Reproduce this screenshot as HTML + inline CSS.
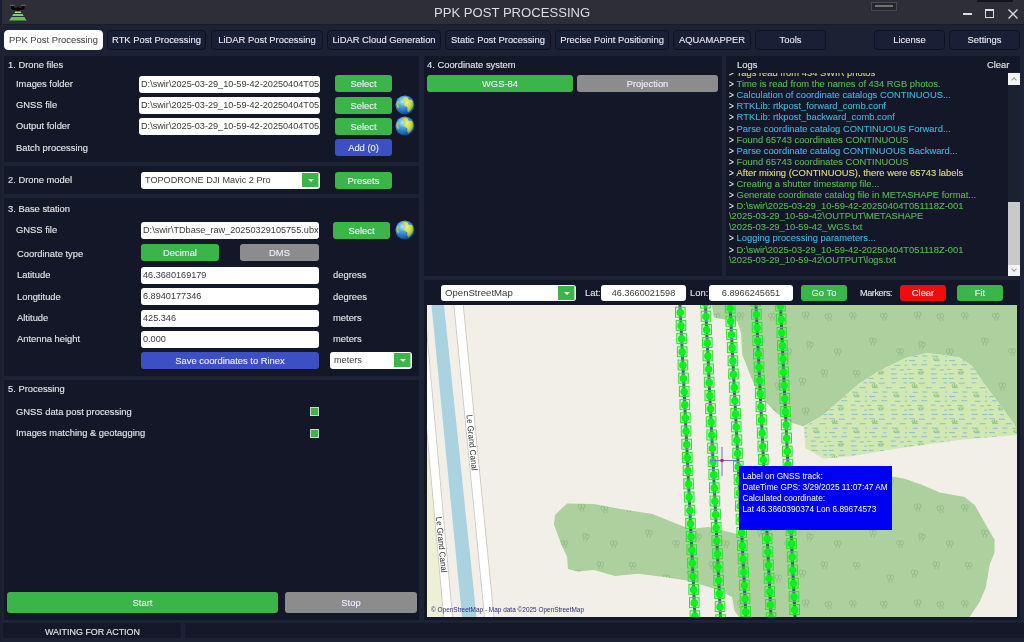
<!DOCTYPE html>
<html><head><meta charset="utf-8">
<style>
*{margin:0;padding:0;box-sizing:border-box}
html,body{width:1024px;height:642px;overflow:hidden;-webkit-font-smoothing:antialiased;background:#131727;font-family:"Liberation Sans",sans-serif;font-size:9.4px;color:#e4e6ea}
.a{position:absolute}
.t{position:absolute;white-space:nowrap;line-height:1}
#title{left:0;top:0;width:1024px;height:23.6px;background:#2d2e38}
#tabbar{left:0;top:23.6px;width:1024px;height:32.4px;background:#1d2134;border-top:1.4px solid #1b1c26}
.tab{position:absolute;top:29.5px;height:20.9px;background:#192036;border:1px solid #0e1220;border-radius:4px;color:#e6e8ee;text-align:center;line-height:18.9px;font-size:9.4px}
.tab.on{background:#fdfdfd;color:#4a4a4a;border-color:#fdfdfd}
.panel{position:absolute;background:#141728}
.div{position:absolute;background:#1d2235}
.inp{position:absolute;background:#fff;border-radius:3px;color:#3a3a3a;font-size:9.15px;line-height:17px;padding-left:2px;white-space:nowrap;overflow:hidden}
.btn{position:absolute;border-radius:3px;color:#eef;text-align:center;font-size:9.4px;white-space:nowrap}
.g{background:#3bb54a}
.b{background:#3d4fc4}
.gr{background:#8c8c8c}
.r{background:#f00c0c}
.lbl{position:absolute;white-space:nowrap;line-height:1;color:#e4e6ea;margin-top:-1px}
.lbl,.tab,.btn,#log,.t{-webkit-text-stroke-width:0.12px}
.tab.on{-webkit-text-stroke-width:0.05px}
.gt{color:#e8e8ee;display:inline-block;width:7.6px;font-size:8.4px;line-height:0}
#log>div{height:11.12px}
#log>div.lg{height:10.5px}
.lg{color:#56b656}
.lc{color:#3cb4dc}
.ly{color:#dede8a}
</style></head><body><div id="root" style="position:absolute;left:0;top:0;width:1024px;height:642px;will-change:transform">
<!-- title bar -->
<div class="a" id="title"></div>
<div class="a" style="left:0;top:0;width:1.5px;height:642px;background:#1b1f2e"></div>
<div class="t" style="left:434px;top:6px;font-size:13.1px;color:#dcdde2;-webkit-text-stroke-width:0">PPK POST PROCESSING</div>


<!-- logo -->
<svg class="a" style="left:0;top:0" width="32" height="23" viewBox="0 0 32 23">
<path d="M10 5.3h4.5M21 5.3h4.5" stroke="#6a6a70" stroke-width="1.1"/>
<path d="M11 6.2h3v1.6h2.6l1.2-1.4 1.2 1.4h2.6V6.2h3v2.4l-2.6 1.4h-2.4l-1.8 1.2-1.8-1.2h-2.4L11 8.6z" fill="#060606"/>
<polygon points="15.2,11.6 20.6,11.6 21.4,13.1 14.4,13.1" fill="#b2dca0"/>
<polygon points="13.2,14 22.6,14 23.6,16.1 12.2,16.1" fill="#86cb70"/>
<polygon points="11.4,17 24.4,17 26.6,20.4 9,20.4" fill="#6cbd58"/>
</svg>
<!-- window controls -->
<div class="a" style="left:963px;top:13px;width:9px;height:2px;background:#dcdcdc"></div>
<div class="a" style="left:985px;top:9px;width:9px;height:9px;border:1.3px solid #dcdcdc;border-top-width:2px"></div>
<svg class="a" style="left:1007px;top:8px" width="12" height="12" viewBox="0 0 12 12"><path d="M1.5 1.5l9 9M10.5 1.5l-9 9" stroke="#dcdcdc" stroke-width="1.4"/></svg>
<div class="a" style="left:871px;top:2px;width:26px;height:9px;border:1px solid #4a4a52;background:#26262e"></div>
<div class="a" style="left:875px;top:5px;width:18px;height:2px;background:#74746a"></div>
<div class="a" style="left:977px;top:0;width:36px;height:2px;background:#141418"></div>

<!-- tab bar -->
<div class="a" id="tabbar"></div>
<div class="tab on" style="left:4px;width:99px">PPK Post Processing</div>
<div class="tab" style="left:107px;width:99px">RTK Post Processing</div>
<div class="tab" style="left:211px;width:112px">LiDAR Post Processing</div>
<div class="tab" style="left:327px;width:114px">LiDAR Cloud Generation</div>
<div class="tab" style="left:445px;width:106px">Static Post Processing</div>
<div class="tab" style="left:555px;width:114px">Precise Point Positioning</div>
<div class="tab" style="left:673px;width:78px">AQUAMAPPER</div>
<div class="tab" style="left:755px;width:71px">Tools</div>
<div class="tab" style="left:874px;width:71px">License</div>
<div class="tab" style="left:949px;width:71px">Settings</div>

<!-- panel frame -->
<div class="div" style="left:2px;top:56px;width:1022px;height:566px"></div>
<div class="panel" style="left:4px;top:56px;width:415px;height:106px"></div>
<div class="panel" style="left:4px;top:166px;width:415px;height:28px"></div>
<div class="panel" style="left:4px;top:198px;width:415px;height:178px"></div>
<div class="panel" style="left:4px;top:380px;width:415px;height:240px"></div>
<div class="panel" style="left:424px;top:56px;width:298px;height:220px"></div>
<div class="panel" style="left:726px;top:56px;width:294px;height:220px"></div>
<div class="panel" style="left:424px;top:280px;width:596px;height:340px"></div>


<!-- ===== left panel ===== -->
<div class="lbl" style="left:8px;top:61px">1. Drone files</div>
<div class="lbl" style="left:16px;top:80px">Images folder</div>
<div class="lbl" style="left:16px;top:101px">GNSS file</div>
<div class="lbl" style="left:16px;top:122px">Output folder</div>
<div class="lbl" style="left:16px;top:144px">Batch processing</div>
<div class="inp" style="left:139px;top:76px;width:181px;height:17px">D:\swir\2025-03-29_10-59-42-20250404T051118Z-001</div>
<div class="inp" style="left:139px;top:97px;width:181px;height:17px">D:\swir\2025-03-29_10-59-42-20250404T051118Z-001</div>
<div class="inp" style="left:139px;top:118px;width:181px;height:17px">D:\swir\2025-03-29_10-59-42-20250404T051118Z-001</div>
<div class="btn g" style="left:335px;top:75px;width:57px;height:17px;line-height:17px">Select</div>
<div class="btn g" style="left:335px;top:97px;width:57px;height:17px;line-height:17px">Select</div>
<div class="btn g" style="left:335px;top:118px;width:57px;height:17px;line-height:17px">Select</div>
<div class="btn b" style="left:335px;top:139px;width:57px;height:17px;line-height:17px">Add (0)</div>
<svg class="a" style="left:394.5px;top:95px" width="20" height="20" viewBox="0 0 20 20"><defs><radialGradient id="gl" cx="38%" cy="32%" r="72%"><stop offset="0" stop-color="#b8ecff"/><stop offset=".35" stop-color="#4aa6e8"/><stop offset=".8" stop-color="#1a5fb0"/><stop offset="1" stop-color="#0c3a78"/></radialGradient><radialGradient id="gll" cx="40%" cy="35%" r="70%"><stop offset="0" stop-color="#eef27a"/><stop offset=".6" stop-color="#c2d640"/><stop offset="1" stop-color="#6a9a30"/></radialGradient></defs><circle cx="10" cy="10" r="9.6" fill="url(#gl)"/><path d="M7.5 2.2c1.5-.6 3.5-.8 5 .2 1 .6.2 1.6 1.2 2 1.2.4 2.6-.3 3.6 1 .8 1.2 1.2 3 1.1 4.6-.2 1.8-1 3.4-2.2 4.7-.8.8-1.6 2-2.6 2.5-.8.4-1-.8-1.2-1.6-.3-1.2.4-2.4-.2-3.4-.6-1-2.2-.8-3-1.8-.8-1-.2-2.4.6-3.2.6-.6-.2-1.4-1-1.6-.8-.2-1.4-.8-1.3-1.6z" fill="url(#gll)"/><path d="M2.4 6.5c.8-.4 1.6.2 1.6 1s-.8 1.6-.6 2.4c.2.9 1 1.6.7 2.4-.3.8-1.3.6-1.8 0-.7-1-.9-2.4-.8-3.7z" fill="#b8d040" opacity=".9"/></svg>
<svg class="a" style="left:394.5px;top:116px" width="20" height="20" viewBox="0 0 20 20"><defs><radialGradient id="gl2" cx="38%" cy="32%" r="72%"><stop offset="0" stop-color="#b8ecff"/><stop offset=".35" stop-color="#4aa6e8"/><stop offset=".8" stop-color="#1a5fb0"/><stop offset="1" stop-color="#0c3a78"/></radialGradient><radialGradient id="gl2l" cx="40%" cy="35%" r="70%"><stop offset="0" stop-color="#eef27a"/><stop offset=".6" stop-color="#c2d640"/><stop offset="1" stop-color="#6a9a30"/></radialGradient></defs><circle cx="10" cy="10" r="9.6" fill="url(#gl2)"/><path d="M7.5 2.2c1.5-.6 3.5-.8 5 .2 1 .6.2 1.6 1.2 2 1.2.4 2.6-.3 3.6 1 .8 1.2 1.2 3 1.1 4.6-.2 1.8-1 3.4-2.2 4.7-.8.8-1.6 2-2.6 2.5-.8.4-1-.8-1.2-1.6-.3-1.2.4-2.4-.2-3.4-.6-1-2.2-.8-3-1.8-.8-1-.2-2.4.6-3.2.6-.6-.2-1.4-1-1.6-.8-.2-1.4-.8-1.3-1.6z" fill="url(#gl2l)"/><path d="M2.4 6.5c.8-.4 1.6.2 1.6 1s-.8 1.6-.6 2.4c.2.9 1 1.6.7 2.4-.3.8-1.3.6-1.8 0-.7-1-.9-2.4-.8-3.7z" fill="#b8d040" opacity=".9"/></svg>
<svg class="a" style="left:394.5px;top:220px" width="20" height="20" viewBox="0 0 20 20"><defs><radialGradient id="gl3" cx="38%" cy="32%" r="72%"><stop offset="0" stop-color="#b8ecff"/><stop offset=".35" stop-color="#4aa6e8"/><stop offset=".8" stop-color="#1a5fb0"/><stop offset="1" stop-color="#0c3a78"/></radialGradient><radialGradient id="gl3l" cx="40%" cy="35%" r="70%"><stop offset="0" stop-color="#eef27a"/><stop offset=".6" stop-color="#c2d640"/><stop offset="1" stop-color="#6a9a30"/></radialGradient></defs><circle cx="10" cy="10" r="9.6" fill="url(#gl3)"/><path d="M7.5 2.2c1.5-.6 3.5-.8 5 .2 1 .6.2 1.6 1.2 2 1.2.4 2.6-.3 3.6 1 .8 1.2 1.2 3 1.1 4.6-.2 1.8-1 3.4-2.2 4.7-.8.8-1.6 2-2.6 2.5-.8.4-1-.8-1.2-1.6-.3-1.2.4-2.4-.2-3.4-.6-1-2.2-.8-3-1.8-.8-1-.2-2.4.6-3.2.6-.6-.2-1.4-1-1.6-.8-.2-1.4-.8-1.3-1.6z" fill="url(#gl3l)"/><path d="M2.4 6.5c.8-.4 1.6.2 1.6 1s-.8 1.6-.6 2.4c.2.9 1 1.6.7 2.4-.3.8-1.3.6-1.8 0-.7-1-.9-2.4-.8-3.7z" fill="#b8d040" opacity=".9"/></svg>
<div class="lbl" style="left:8px;top:176px">2. Drone model</div>
<div class="inp" style="left:141px;top:172px;width:179px;height:17px;padding-left:4px">TOPODRONE DJI Mavic 2 Pro</div>
<div class="a g" style="left:302px;top:173px;width:16.7px;height:14px;border-right:1px solid #a8dca8"></div>
<div class="a" style="left:307.6px;top:178.6px;width:0;height:0;border-left:3px solid transparent;border-right:3px solid transparent;border-top:3.3px solid #f4fff4"></div>
<div class="btn g" style="left:335px;top:172px;width:57px;height:17px;line-height:17px">Presets</div>

<div class="lbl" style="left:8px;top:205px">3. Base station</div>
<div class="lbl" style="left:16px;top:226px">GNSS file</div>
<div class="inp" style="left:141px;top:222px;width:178px;height:17px">D:\swir\TDbase_raw_20250329105755.ubx</div>
<div class="btn g" style="left:333px;top:222px;width:57px;height:17px;line-height:17px">Select</div>
<div class="lbl" style="left:17px;top:250px">Coordinate type</div>
<div class="btn g" style="left:141px;top:244px;width:78px;height:17px;line-height:17px">Decimal</div>
<div class="btn gr" style="left:240px;top:244px;width:79px;height:17px;line-height:17px">DMS</div>
<div class="lbl" style="left:17px;top:271px">Latitude</div>
<div class="lbl" style="left:17px;top:293px">Longtitude</div>
<div class="lbl" style="left:17px;top:314px">Altitude</div>
<div class="lbl" style="left:17px;top:335px">Antenna height</div>
<div class="inp" style="left:141px;top:267px;width:178px;height:17px">46.3680169179</div>
<div class="inp" style="left:141px;top:288px;width:178px;height:17px">6.8940177346</div>
<div class="inp" style="left:141px;top:310px;width:178px;height:17px">425.346</div>
<div class="inp" style="left:141px;top:331px;width:178px;height:17px">0.000</div>
<div class="lbl" style="left:333px;top:271px">degress</div>
<div class="lbl" style="left:333px;top:293px">degrees</div>
<div class="lbl" style="left:333px;top:314px">meters</div>
<div class="lbl" style="left:333px;top:335px">meters</div>
<div class="btn b" style="left:141px;top:352px;width:178px;height:17px;line-height:17px">Save coordinates to Rinex</div>
<div class="inp" style="left:330px;top:352px;width:82px;height:17px;padding-left:4px">meters</div>
<div class="a g" style="left:394px;top:353px;width:16.7px;height:14px;border-right:1px solid #a8dca8"></div>
<div class="a" style="left:399.6px;top:358.6px;width:0;height:0;border-left:3px solid transparent;border-right:3px solid transparent;border-top:3.3px solid #f4fff4"></div>

<div class="lbl" style="left:8px;top:385px">5. Processing</div>
<div class="lbl" style="left:16px;top:408px">GNSS data post processing</div>
<div class="lbl" style="left:16px;top:429px">Images matching &amp; geotagging</div>
<div class="a" style="left:310px;top:407px;width:9px;height:9px;background:#3bb54a;border:1px solid #cfd6cf"></div>
<div class="a" style="left:310px;top:429px;width:9px;height:9px;background:#3bb54a;border:1px solid #cfd6cf"></div>
<div class="btn g" style="left:7px;top:592px;width:271px;height:21px;line-height:21px">Start</div>
<div class="btn gr" style="left:285px;top:592px;width:132px;height:21px;line-height:21px">Stop</div>


<!-- ===== coordinate system ===== -->
<div class="lbl" style="left:427px;top:61px">4. Coordinate system</div>
<div class="btn g" style="left:427px;top:75px;width:146px;height:17px;line-height:17px">WGS-84</div>
<div class="btn gr" style="left:577px;top:75px;width:141px;height:17px;line-height:17px">Projection</div>

<!-- ===== logs ===== -->
<div class="lbl" style="left:737px;top:61px">Logs</div>
<div class="lbl" style="left:987px;top:61px">Clear</div>
<div class="a" style="left:729px;top:72.5px;width:279px;height:203.5px;overflow:hidden">
<div class="a" style="left:0;top:-5.5px;width:290px;font-size:9.4px;line-height:11px" id="log">
<div><span class="gt">&gt;</span><span style="color:#d4d46a">Tags read from 434 SWIR photos</span></div>
<div><span class="gt">&gt;</span><span class="lg">Time is read from the names of 434 RGB photos.</span></div>
<div><span class="gt">&gt;</span><span class="lc">Calculation of coordinate catalogs CONTINUOUS...</span></div>
<div><span class="gt">&gt;</span><span class="lc">RTKLib: rtkpost_forward_comb.conf</span></div>
<div><span class="gt">&gt;</span><span class="lc">RTKLib: rtkpost_backward_comb.conf</span></div>
<div><span class="gt">&gt;</span><span class="lc">Parse coordinate catalog CONTINUOUS Forward...</span></div>
<div><span class="gt">&gt;</span><span class="lg">Found 65743 coordinates CONTINUOUS</span></div>
<div><span class="gt">&gt;</span><span class="lc">Parse coordinate catalog CONTINUOUS Backward...</span></div>
<div><span class="gt">&gt;</span><span class="lg">Found 65743 coordinates CONTINUOUS</span></div>
<div><span class="gt">&gt;</span><span class="ly">After mixing (CONTINUOUS), there were 65743 labels</span></div>
<div><span class="gt">&gt;</span><span class="lg">Creating a shutter timestamp file...</span></div>
<div><span class="gt">&gt;</span><span class="lg">Generate coordinate catalog file in METASHAPE format...</span></div>
<div><span class="gt">&gt;</span><span class="lg">D:\swir\2025-03-29_10-59-42-20250404T051118Z-001</span></div>
<div class="lg" style="line-height:10.5px">\2025-03-29_10-59-42\OUTPUT\METASHAPE</div>
<div class="lg" style="line-height:10.5px">\2025-03-29_10-59-42_WGS.txt</div>
<div><span class="gt">&gt;</span><span class="lc">Logging processing parameters...</span></div>
<div><span class="gt">&gt;</span><span class="lg">D:\swir\2025-03-29_10-59-42-20250404T051118Z-001</span></div>
<div class="lg" style="line-height:10.5px">\2025-03-29_10-59-42\OUTPUT\logs.txt</div>
</div></div>
<!-- scrollbar -->
<div class="a" style="left:1008px;top:72px;width:12px;height:204px;background:#1c2131"></div>
<div class="a" style="left:1008.3px;top:73px;width:12px;height:12px;background:#f4f4f4"></div>
<div class="a" style="left:1012.4px;top:78.4px;width:4px;height:4px;border-left:1.1px solid #9a9a9a;border-top:1.1px solid #9a9a9a;transform:rotate(45deg)"></div>
<div class="a" style="left:1008.3px;top:202px;width:12px;height:63px;background:#c9c9c9"></div>
<div class="a" style="left:1008.3px;top:265px;width:12px;height:11px;background:#f4f4f4"></div>
<div class="a" style="left:1012.4px;top:267px;width:4px;height:4px;border-right:1.1px solid #9a9a9a;border-bottom:1.1px solid #9a9a9a;transform:rotate(45deg)"></div>

<!-- ===== map toolbar ===== -->
<div class="inp" style="left:441px;top:285px;width:135px;height:16px;line-height:16px;padding-left:4px;font-size:9.6px">OpenStreetMap</div>
<div class="a g" style="left:558px;top:286px;width:16.7px;height:14px;border-right:1px solid #a8dca8"></div>
<div class="a" style="left:563.6px;top:291.5px;width:0;height:0;border-left:3px solid transparent;border-right:3px solid transparent;border-top:3.3px solid #f4fff4"></div>
<div class="lbl" style="left:585px;top:289px">Lat:</div>
<div class="inp" style="left:601px;top:285px;width:85px;height:16px;line-height:16px;text-align:center;padding:0">46.3660021598</div>
<div class="lbl" style="left:690px;top:289px">Lon:</div>
<div class="inp" style="left:709px;top:285px;width:84px;height:16px;line-height:16px;text-align:center;padding:0">6.8966245651</div>
<div class="btn g" style="left:801px;top:285px;width:46px;height:16px;line-height:16px">Go To</div>
<div class="lbl" style="left:860px;top:290px;letter-spacing:-0.35px;font-size:9px">Markers:</div>
<div class="btn r" style="left:900px;top:285px;width:46px;height:16px;line-height:16px">Clear</div>
<div class="btn g" style="left:957px;top:285px;width:46px;height:16px;line-height:16px">Fit</div>

<!-- MAP START -->
<svg class="a" style="left:427px;top:305px" width="590" height="312" viewBox="0 0 590 312">
<defs>
<pattern id="trees" patternUnits="userSpaceOnUse" width="112" height="96"><g fill="none" stroke="#8db57f" stroke-width="0.75"><g transform="translate(5.4,7.8) rotate(-9 3.5 4)"><ellipse cx="2" cy="2.6" rx="1.7" ry="2.3"/><ellipse cx="5.2" cy="2.9" rx="1.7" ry="2.3"/><path d="M2.2 5v3M5.2 5.2v2.8"/></g><g transform="translate(39.1,6.5) rotate(-8 3.5 4)"><ellipse cx="2" cy="2.6" rx="1.7" ry="2.3"/><ellipse cx="5.2" cy="2.9" rx="1.7" ry="2.3"/><path d="M2.2 5v3M5.2 5.2v2.8"/></g><g transform="translate(62.1,8.2) rotate(-14 3.5 4)"><ellipse cx="2" cy="2.6" rx="1.7" ry="2.3"/><ellipse cx="5.2" cy="2.9" rx="1.7" ry="2.3"/><path d="M2.2 5v3M5.2 5.2v2.8"/></g><g transform="translate(86.2,7.2) rotate(-1 3.5 4)"><ellipse cx="2" cy="2.6" rx="1.7" ry="2.3"/><ellipse cx="5.2" cy="2.9" rx="1.7" ry="2.3"/><path d="M2.2 5v3M5.2 5.2v2.8"/></g><g transform="translate(21.6,43.1) rotate(-2 3.5 4)"><ellipse cx="2" cy="2.6" rx="1.7" ry="2.3"/><ellipse cx="5.2" cy="2.9" rx="1.7" ry="2.3"/><path d="M2.2 5v3M5.2 5.2v2.8"/></g><g transform="translate(43.1,36.2) rotate(10 3.5 4)"><ellipse cx="2" cy="2.6" rx="1.7" ry="2.3"/><ellipse cx="5.2" cy="2.9" rx="1.7" ry="2.3"/><path d="M2.2 5v3M5.2 5.2v2.8"/></g><g transform="translate(71.1,43.3) rotate(1 3.5 4)"><ellipse cx="2" cy="2.6" rx="1.7" ry="2.3"/><ellipse cx="5.2" cy="2.9" rx="1.7" ry="2.3"/><path d="M2.2 5v3M5.2 5.2v2.8"/></g><g transform="translate(106.3,32.6) rotate(4 3.5 4)"><ellipse cx="2" cy="2.6" rx="1.7" ry="2.3"/><ellipse cx="5.2" cy="2.9" rx="1.7" ry="2.3"/><path d="M2.2 5v3M5.2 5.2v2.8"/></g><g transform="translate(-5.7,32.6) rotate(4 3.5 4)"><ellipse cx="2" cy="2.6" rx="1.7" ry="2.3"/><ellipse cx="5.2" cy="2.9" rx="1.7" ry="2.3"/><path d="M2.2 5v3M5.2 5.2v2.8"/></g><g transform="translate(11.8,77.5) rotate(-0 3.5 4)"><ellipse cx="2" cy="2.6" rx="1.7" ry="2.3"/><ellipse cx="5.2" cy="2.9" rx="1.7" ry="2.3"/><path d="M2.2 5v3M5.2 5.2v2.8"/></g><g transform="translate(35.8,72.6) rotate(5 3.5 4)"><ellipse cx="2" cy="2.6" rx="1.7" ry="2.3"/><ellipse cx="5.2" cy="2.9" rx="1.7" ry="2.3"/><path d="M2.2 5v3M5.2 5.2v2.8"/></g><g transform="translate(57.9,64.2) rotate(-1 3.5 4)"><ellipse cx="2" cy="2.6" rx="1.7" ry="2.3"/><ellipse cx="5.2" cy="2.9" rx="1.7" ry="2.3"/><path d="M2.2 5v3M5.2 5.2v2.8"/></g><g transform="translate(90.3,64.8) rotate(-7 3.5 4)"><ellipse cx="2" cy="2.6" rx="1.7" ry="2.3"/><ellipse cx="5.2" cy="2.9" rx="1.7" ry="2.3"/><path d="M2.2 5v3M5.2 5.2v2.8"/></g></g></pattern>
<pattern id="wet" patternUnits="userSpaceOnUse" width="40" height="36"><rect width="40" height="36" fill="#d1e8b3"/><rect x="1.4" y="0.9" width="5" height="1" fill="#90bfcb"/><rect x="12.8" y="1.1" width="4" height="1" fill="#90bfcb"/><rect x="24.5" y="0.8" width="6" height="1" fill="#90bfcb"/><rect x="35.4" y="1.0" width="6" height="1" fill="#90bfcb"/><rect x="2.4" y="5.3" width="5" height="1" fill="#90bfcb"/><rect x="12.0" y="5.7" width="6" height="1" fill="#90bfcb"/><rect x="24.7" y="5.2" width="4" height="1" fill="#90bfcb"/><rect x="36.5" y="5.3" width="4" height="1" fill="#90bfcb"/><rect x="5.2" y="10.1" width="6" height="1" fill="#90bfcb"/><rect x="18.9" y="10.2" width="6" height="1" fill="#90bfcb"/><rect x="32.6" y="10.2" width="6" height="1" fill="#90bfcb"/><rect x="5.8" y="14.8" width="5" height="1" fill="#90bfcb"/><rect x="15.2" y="14.5" width="5" height="1" fill="#90bfcb"/><rect x="25.2" y="14.7" width="6" height="1" fill="#90bfcb"/><rect x="38.6" y="14.5" width="6" height="1" fill="#90bfcb"/><rect x="2.1" y="19.1" width="6" height="1" fill="#90bfcb"/><rect x="15.7" y="19.3" width="4" height="1" fill="#90bfcb"/><rect x="27.7" y="19.2" width="5" height="1" fill="#90bfcb"/><rect x="38.0" y="19.2" width="4" height="1" fill="#90bfcb"/><rect x="5.0" y="23.3" width="5" height="1" fill="#90bfcb"/><rect x="14.2" y="23.2" width="6" height="1" fill="#90bfcb"/><rect x="27.4" y="23.8" width="6" height="1" fill="#90bfcb"/><rect x="37.5" y="23.7" width="6" height="1" fill="#90bfcb"/><rect x="0.3" y="27.9" width="4" height="1" fill="#90bfcb"/><rect x="10.6" y="28.0" width="5" height="1" fill="#90bfcb"/><rect x="23.6" y="27.6" width="5" height="1" fill="#90bfcb"/><rect x="33.0" y="28.4" width="4" height="1" fill="#90bfcb"/><rect x="1.7" y="32.2" width="5" height="1" fill="#90bfcb"/><rect x="10.9" y="32.4" width="5" height="1" fill="#90bfcb"/><rect x="23.8" y="32.4" width="6" height="1" fill="#90bfcb"/><rect x="37.2" y="32.6" width="6" height="1" fill="#90bfcb"/></pattern>
<pattern id="grass" patternUnits="userSpaceOnUse" width="40" height="36"><g stroke="#8fc47a" stroke-width="0.85" fill="none"><g transform="translate(6.5,6.0)"><path d="M0 4l-1-3M1 4V0M2 4l1-3M-.5 4l-1.5-2M2.5 4l1.5-2"/></g><g transform="translate(28.2,15.8)"><path d="M0 4l-1-3M1 4V0M2 4l1-3M-.5 4l-1.5-2M2.5 4l1.5-2"/></g><g transform="translate(13.0,28.7)"><path d="M0 4l-1-3M1 4V0M2 4l1-3M-.5 4l-1.5-2M2.5 4l1.5-2"/></g></g></pattern>
</defs>
<rect width="590" height="312" fill="#f2efe9"/>
<polygon points="0.0,153.0 6.0,153.0 19.0,312.0 0.0,312.0" fill="#eef0d6"/>
<line x1="-8" y1="-10" x2="22" y2="322" stroke="#c9c5c0" stroke-width="9.6"/><line x1="-8" y1="-10" x2="22" y2="322" stroke="#ffffff" stroke-width="8"/>
<line x1="30.600000000000023" y1="-10" x2="63.19999999999999" y2="322" stroke="#c9c5c0" stroke-width="10.1"/><line x1="30.600000000000023" y1="-10" x2="63.19999999999999" y2="322" stroke="#ffffff" stroke-width="8.5"/>
<polygon points="4.5,0.0 17.0,0.0 49.5,312.0 35.0,312.0" fill="#aad3df"/>
<polygon points="284.8,0.0 287.0,12.4 298.0,14.6 310.0,15.7 314.0,27.7 315.3,49.5 322.0,67.0 328.4,82.2 337.0,95.3 350.0,108.4 363.0,117.0 376.4,121.5 394.0,111.4 412.7,95.5 431.0,79.6 452.0,66.0 478.8,53.0 500.0,48.0 531.7,52.0 545.0,61.0 558.0,80.0 574.0,101.0 587.0,119.0 590.0,125.0 590.0,0.0" fill="#add19e"/>
<polygon points="284.8,0.0 287.0,12.4 298.0,14.6 310.0,15.7 314.0,27.7 315.3,49.5 322.0,67.0 328.4,82.2 337.0,95.3 350.0,108.4 363.0,117.0 376.4,121.5 394.0,111.4 412.7,95.5 431.0,79.6 452.0,66.0 478.8,53.0 500.0,48.0 531.7,52.0 545.0,61.0 558.0,80.0 574.0,101.0 587.0,119.0 590.0,125.0 590.0,0.0" fill="url(#trees)"/>
<polygon points="140.0,198.4 167.0,199.0 195.0,204.3 225.5,209.0 249.0,218.4 263.0,224.0 281.7,222.0 310.0,229.0 353.0,215.0 403.0,195.0 464.0,171.2 477.8,173.7 495.3,180.0 512.8,187.4 537.7,192.0 547.7,200.0 558.9,219.8 567.6,234.8 567.6,247.3 562.6,259.7 558.9,282.2 552.6,297.1 542.7,312.0 312.0,312.0 307.5,306.0 305.0,292.0 291.0,285.0 263.0,276.0 237.0,272.0 211.4,268.7 188.0,271.0 167.0,265.0 150.5,266.4 141.0,264.0 140.0,252.0 133.0,236.0 127.0,219.5 128.0,210.0" fill="#add19e"/>
<polygon points="140.0,198.4 167.0,199.0 195.0,204.3 225.5,209.0 249.0,218.4 263.0,224.0 281.7,222.0 310.0,229.0 353.0,215.0 403.0,195.0 464.0,171.2 477.8,173.7 495.3,180.0 512.8,187.4 537.7,192.0 547.7,200.0 558.9,219.8 567.6,234.8 567.6,247.3 562.6,259.7 558.9,282.2 552.6,297.1 542.7,312.0 312.0,312.0 307.5,306.0 305.0,292.0 291.0,285.0 263.0,276.0 237.0,272.0 211.4,268.7 188.0,271.0 167.0,265.0 150.5,266.4 141.0,264.0 140.0,252.0 133.0,236.0 127.0,219.5 128.0,210.0" fill="url(#trees)"/>
<polygon points="377.0,122.0 378.3,143.0 396.8,153.7 425.9,151.0 473.5,143.0 531.7,135.0 590.0,130.0 590.0,125.0 587.0,119.0 574.0,101.0 558.0,80.0 545.0,61.0 531.7,52.0 500.0,48.0 478.8,53.0 452.0,66.0 431.0,79.6 412.7,95.5 394.0,111.4" fill="url(#wet)"/>
<polygon points="377.0,122.0 378.3,143.0 396.8,153.7 425.9,151.0 473.5,143.0 531.7,135.0 590.0,130.0 590.0,125.0 587.0,119.0 574.0,101.0 558.0,80.0 545.0,61.0 531.7,52.0 500.0,48.0 478.8,53.0 452.0,66.0 431.0,79.6 412.7,95.5 394.0,111.4" fill="url(#grass)"/>
<text transform="translate(39.5,110) rotate(84.6)" font-family="Liberation Sans" font-size="8.6" fill="#333" textLength="56" lengthAdjust="spacingAndGlyphs">Le Grand Canal</text>
<text transform="translate(9,212) rotate(84.6)" font-family="Liberation Sans" font-size="8.6" fill="#333" textLength="56" lengthAdjust="spacingAndGlyphs">Le Grand Canal</text>
<line x1="252.5" y1="-10" x2="268.5" y2="322" stroke="#24486a" stroke-opacity="0.85" stroke-width="3"/>
<line x1="278.0" y1="-10" x2="294.0" y2="322" stroke="#24486a" stroke-opacity="0.85" stroke-width="3"/>
<line x1="302.5" y1="-10" x2="319.5" y2="322" stroke="#24486a" stroke-opacity="0.85" stroke-width="3"/>
<line x1="328.5" y1="-10" x2="344.5" y2="322" stroke="#24486a" stroke-opacity="0.85" stroke-width="3"/>
<line x1="353.0" y1="-10" x2="368.5" y2="322" stroke="#24486a" stroke-opacity="0.85" stroke-width="3"/>
<rect x="247.9" y="-11.0" width="9.6" height="10" fill="#44ff44" fill-opacity="0.22" stroke="#2ee02e" stroke-width="1"/>
<circle cx="252.7" cy="-5.7" r="3.8" fill="#08f21e"/>
<rect x="248.5" y="2.2" width="9.6" height="10" fill="#44ff44" fill-opacity="0.22" stroke="#2ee02e" stroke-width="1"/>
<circle cx="253.3" cy="7.5" r="3.8" fill="#08f21e"/>
<rect x="249.2" y="15.4" width="9.6" height="10" fill="#44ff44" fill-opacity="0.22" stroke="#2ee02e" stroke-width="1"/>
<circle cx="254.0" cy="20.7" r="3.8" fill="#08f21e"/>
<rect x="249.8" y="28.6" width="9.6" height="10" fill="#44ff44" fill-opacity="0.22" stroke="#2ee02e" stroke-width="1"/>
<circle cx="254.6" cy="33.9" r="3.8" fill="#08f21e"/>
<rect x="250.4" y="41.8" width="9.6" height="10" fill="#44ff44" fill-opacity="0.22" stroke="#2ee02e" stroke-width="1"/>
<circle cx="255.2" cy="47.1" r="3.8" fill="#08f21e"/>
<rect x="251.1" y="55.0" width="9.6" height="10" fill="#44ff44" fill-opacity="0.22" stroke="#2ee02e" stroke-width="1"/>
<circle cx="255.9" cy="60.3" r="3.8" fill="#08f21e"/>
<rect x="251.7" y="68.2" width="9.6" height="10" fill="#44ff44" fill-opacity="0.22" stroke="#2ee02e" stroke-width="1"/>
<circle cx="256.5" cy="73.5" r="3.8" fill="#08f21e"/>
<rect x="252.4" y="81.4" width="9.6" height="10" fill="#44ff44" fill-opacity="0.22" stroke="#2ee02e" stroke-width="1"/>
<circle cx="257.2" cy="86.7" r="3.8" fill="#08f21e"/>
<rect x="253.0" y="94.6" width="9.6" height="10" fill="#44ff44" fill-opacity="0.22" stroke="#2ee02e" stroke-width="1"/>
<circle cx="257.8" cy="99.9" r="3.8" fill="#08f21e"/>
<rect x="253.6" y="107.8" width="9.6" height="10" fill="#44ff44" fill-opacity="0.22" stroke="#2ee02e" stroke-width="1"/>
<circle cx="258.4" cy="113.1" r="3.8" fill="#08f21e"/>
<rect x="254.3" y="121.0" width="9.6" height="10" fill="#44ff44" fill-opacity="0.22" stroke="#2ee02e" stroke-width="1"/>
<circle cx="259.1" cy="126.3" r="3.8" fill="#08f21e"/>
<rect x="254.9" y="134.2" width="9.6" height="10" fill="#44ff44" fill-opacity="0.22" stroke="#2ee02e" stroke-width="1"/>
<circle cx="259.7" cy="139.5" r="3.8" fill="#08f21e"/>
<rect x="255.5" y="147.4" width="9.6" height="10" fill="#44ff44" fill-opacity="0.22" stroke="#2ee02e" stroke-width="1"/>
<circle cx="260.3" cy="152.7" r="3.8" fill="#08f21e"/>
<rect x="256.2" y="160.6" width="9.6" height="10" fill="#44ff44" fill-opacity="0.22" stroke="#2ee02e" stroke-width="1"/>
<circle cx="261.0" cy="165.9" r="3.8" fill="#08f21e"/>
<rect x="256.8" y="173.8" width="9.6" height="10" fill="#44ff44" fill-opacity="0.22" stroke="#2ee02e" stroke-width="1"/>
<circle cx="261.6" cy="179.1" r="3.8" fill="#08f21e"/>
<rect x="257.4" y="187.0" width="9.6" height="10" fill="#44ff44" fill-opacity="0.22" stroke="#2ee02e" stroke-width="1"/>
<circle cx="262.2" cy="192.3" r="3.8" fill="#08f21e"/>
<rect x="258.1" y="200.2" width="9.6" height="10" fill="#44ff44" fill-opacity="0.22" stroke="#2ee02e" stroke-width="1"/>
<circle cx="262.9" cy="205.5" r="3.8" fill="#08f21e"/>
<rect x="258.7" y="213.4" width="9.6" height="10" fill="#44ff44" fill-opacity="0.22" stroke="#2ee02e" stroke-width="1"/>
<circle cx="263.5" cy="218.7" r="3.8" fill="#08f21e"/>
<rect x="259.3" y="226.6" width="9.6" height="10" fill="#44ff44" fill-opacity="0.22" stroke="#2ee02e" stroke-width="1"/>
<circle cx="264.1" cy="231.9" r="3.8" fill="#08f21e"/>
<rect x="260.0" y="239.8" width="9.6" height="10" fill="#44ff44" fill-opacity="0.22" stroke="#2ee02e" stroke-width="1"/>
<circle cx="264.8" cy="245.1" r="3.8" fill="#08f21e"/>
<rect x="260.6" y="253.0" width="9.6" height="10" fill="#44ff44" fill-opacity="0.22" stroke="#2ee02e" stroke-width="1"/>
<circle cx="265.4" cy="258.3" r="3.8" fill="#08f21e"/>
<rect x="261.2" y="266.2" width="9.6" height="10" fill="#44ff44" fill-opacity="0.22" stroke="#2ee02e" stroke-width="1"/>
<circle cx="266.0" cy="271.5" r="3.8" fill="#08f21e"/>
<rect x="261.9" y="279.4" width="9.6" height="10" fill="#44ff44" fill-opacity="0.22" stroke="#2ee02e" stroke-width="1"/>
<circle cx="266.7" cy="284.7" r="3.8" fill="#08f21e"/>
<rect x="262.5" y="292.6" width="9.6" height="10" fill="#44ff44" fill-opacity="0.22" stroke="#2ee02e" stroke-width="1"/>
<circle cx="267.3" cy="297.9" r="3.8" fill="#08f21e"/>
<rect x="263.1" y="305.8" width="9.6" height="10" fill="#44ff44" fill-opacity="0.22" stroke="#2ee02e" stroke-width="1"/>
<circle cx="267.9" cy="311.1" r="3.8" fill="#08f21e"/>
<rect x="273.6" y="-7.0" width="9.6" height="10" fill="#44ff44" fill-opacity="0.22" stroke="#2ee02e" stroke-width="1"/>
<circle cx="278.4" cy="-1.7" r="3.8" fill="#08f21e"/>
<rect x="274.2" y="6.2" width="9.6" height="10" fill="#44ff44" fill-opacity="0.22" stroke="#2ee02e" stroke-width="1"/>
<circle cx="279.0" cy="11.5" r="3.8" fill="#08f21e"/>
<rect x="274.9" y="19.4" width="9.6" height="10" fill="#44ff44" fill-opacity="0.22" stroke="#2ee02e" stroke-width="1"/>
<circle cx="279.7" cy="24.7" r="3.8" fill="#08f21e"/>
<rect x="275.5" y="32.6" width="9.6" height="10" fill="#44ff44" fill-opacity="0.22" stroke="#2ee02e" stroke-width="1"/>
<circle cx="280.3" cy="37.9" r="3.8" fill="#08f21e"/>
<rect x="276.1" y="45.8" width="9.6" height="10" fill="#44ff44" fill-opacity="0.22" stroke="#2ee02e" stroke-width="1"/>
<circle cx="280.9" cy="51.1" r="3.8" fill="#08f21e"/>
<rect x="276.8" y="59.0" width="9.6" height="10" fill="#44ff44" fill-opacity="0.22" stroke="#2ee02e" stroke-width="1"/>
<circle cx="281.6" cy="64.3" r="3.8" fill="#08f21e"/>
<rect x="277.4" y="72.2" width="9.6" height="10" fill="#44ff44" fill-opacity="0.22" stroke="#2ee02e" stroke-width="1"/>
<circle cx="282.2" cy="77.5" r="3.8" fill="#08f21e"/>
<rect x="278.0" y="85.4" width="9.6" height="10" fill="#44ff44" fill-opacity="0.22" stroke="#2ee02e" stroke-width="1"/>
<circle cx="282.8" cy="90.7" r="3.8" fill="#08f21e"/>
<rect x="278.7" y="98.6" width="9.6" height="10" fill="#44ff44" fill-opacity="0.22" stroke="#2ee02e" stroke-width="1"/>
<circle cx="283.5" cy="103.9" r="3.8" fill="#08f21e"/>
<rect x="279.3" y="111.8" width="9.6" height="10" fill="#44ff44" fill-opacity="0.22" stroke="#2ee02e" stroke-width="1"/>
<circle cx="284.1" cy="117.1" r="3.8" fill="#08f21e"/>
<rect x="279.9" y="125.0" width="9.6" height="10" fill="#44ff44" fill-opacity="0.22" stroke="#2ee02e" stroke-width="1"/>
<circle cx="284.8" cy="130.3" r="3.8" fill="#08f21e"/>
<rect x="280.6" y="138.2" width="9.6" height="10" fill="#44ff44" fill-opacity="0.22" stroke="#2ee02e" stroke-width="1"/>
<circle cx="285.4" cy="143.5" r="3.8" fill="#08f21e"/>
<rect x="281.2" y="151.4" width="9.6" height="10" fill="#44ff44" fill-opacity="0.22" stroke="#2ee02e" stroke-width="1"/>
<circle cx="286.0" cy="156.7" r="3.8" fill="#08f21e"/>
<rect x="281.9" y="164.6" width="9.6" height="10" fill="#44ff44" fill-opacity="0.22" stroke="#2ee02e" stroke-width="1"/>
<circle cx="286.7" cy="169.9" r="3.8" fill="#08f21e"/>
<rect x="282.5" y="177.8" width="9.6" height="10" fill="#44ff44" fill-opacity="0.22" stroke="#2ee02e" stroke-width="1"/>
<circle cx="287.3" cy="183.1" r="3.8" fill="#08f21e"/>
<rect x="283.1" y="191.0" width="9.6" height="10" fill="#44ff44" fill-opacity="0.22" stroke="#2ee02e" stroke-width="1"/>
<circle cx="287.9" cy="196.3" r="3.8" fill="#08f21e"/>
<rect x="283.8" y="204.2" width="9.6" height="10" fill="#44ff44" fill-opacity="0.22" stroke="#2ee02e" stroke-width="1"/>
<circle cx="288.6" cy="209.5" r="3.8" fill="#08f21e"/>
<rect x="284.4" y="217.4" width="9.6" height="10" fill="#44ff44" fill-opacity="0.22" stroke="#2ee02e" stroke-width="1"/>
<circle cx="289.2" cy="222.7" r="3.8" fill="#08f21e"/>
<rect x="285.0" y="230.6" width="9.6" height="10" fill="#44ff44" fill-opacity="0.22" stroke="#2ee02e" stroke-width="1"/>
<circle cx="289.8" cy="235.9" r="3.8" fill="#08f21e"/>
<rect x="285.7" y="243.8" width="9.6" height="10" fill="#44ff44" fill-opacity="0.22" stroke="#2ee02e" stroke-width="1"/>
<circle cx="290.5" cy="249.1" r="3.8" fill="#08f21e"/>
<rect x="286.3" y="257.0" width="9.6" height="10" fill="#44ff44" fill-opacity="0.22" stroke="#2ee02e" stroke-width="1"/>
<circle cx="291.1" cy="262.3" r="3.8" fill="#08f21e"/>
<rect x="286.9" y="270.2" width="9.6" height="10" fill="#44ff44" fill-opacity="0.22" stroke="#2ee02e" stroke-width="1"/>
<circle cx="291.7" cy="275.5" r="3.8" fill="#08f21e"/>
<rect x="287.6" y="283.4" width="9.6" height="10" fill="#44ff44" fill-opacity="0.22" stroke="#2ee02e" stroke-width="1"/>
<circle cx="292.4" cy="288.7" r="3.8" fill="#08f21e"/>
<rect x="288.2" y="296.6" width="9.6" height="10" fill="#44ff44" fill-opacity="0.22" stroke="#2ee02e" stroke-width="1"/>
<circle cx="293.0" cy="301.9" r="3.8" fill="#08f21e"/>
<rect x="288.8" y="309.8" width="9.6" height="10" fill="#44ff44" fill-opacity="0.22" stroke="#2ee02e" stroke-width="1"/>
<circle cx="293.6" cy="315.1" r="3.8" fill="#08f21e"/>
<rect x="298.4" y="-2.0" width="9.6" height="10" fill="#44ff44" fill-opacity="0.22" stroke="#2ee02e" stroke-width="1"/>
<circle cx="303.2" cy="3.3" r="3.8" fill="#08f21e"/>
<rect x="299.0" y="11.2" width="9.6" height="10" fill="#44ff44" fill-opacity="0.22" stroke="#2ee02e" stroke-width="1"/>
<circle cx="303.8" cy="16.5" r="3.8" fill="#08f21e"/>
<rect x="299.7" y="24.4" width="9.6" height="10" fill="#44ff44" fill-opacity="0.22" stroke="#2ee02e" stroke-width="1"/>
<circle cx="304.5" cy="29.7" r="3.8" fill="#08f21e"/>
<rect x="300.4" y="37.6" width="9.6" height="10" fill="#44ff44" fill-opacity="0.22" stroke="#2ee02e" stroke-width="1"/>
<circle cx="305.2" cy="42.9" r="3.8" fill="#08f21e"/>
<rect x="301.1" y="50.8" width="9.6" height="10" fill="#44ff44" fill-opacity="0.22" stroke="#2ee02e" stroke-width="1"/>
<circle cx="305.9" cy="56.1" r="3.8" fill="#08f21e"/>
<rect x="301.7" y="64.0" width="9.6" height="10" fill="#44ff44" fill-opacity="0.22" stroke="#2ee02e" stroke-width="1"/>
<circle cx="306.5" cy="69.3" r="3.8" fill="#08f21e"/>
<rect x="302.4" y="77.2" width="9.6" height="10" fill="#44ff44" fill-opacity="0.22" stroke="#2ee02e" stroke-width="1"/>
<circle cx="307.2" cy="82.5" r="3.8" fill="#08f21e"/>
<rect x="303.1" y="90.4" width="9.6" height="10" fill="#44ff44" fill-opacity="0.22" stroke="#2ee02e" stroke-width="1"/>
<circle cx="307.9" cy="95.7" r="3.8" fill="#08f21e"/>
<rect x="303.8" y="103.6" width="9.6" height="10" fill="#44ff44" fill-opacity="0.22" stroke="#2ee02e" stroke-width="1"/>
<circle cx="308.6" cy="108.9" r="3.8" fill="#08f21e"/>
<rect x="304.4" y="116.8" width="9.6" height="10" fill="#44ff44" fill-opacity="0.22" stroke="#2ee02e" stroke-width="1"/>
<circle cx="309.2" cy="122.1" r="3.8" fill="#08f21e"/>
<rect x="305.1" y="130.0" width="9.6" height="10" fill="#44ff44" fill-opacity="0.22" stroke="#2ee02e" stroke-width="1"/>
<circle cx="309.9" cy="135.3" r="3.8" fill="#08f21e"/>
<rect x="305.8" y="143.2" width="9.6" height="10" fill="#44ff44" fill-opacity="0.22" stroke="#2ee02e" stroke-width="1"/>
<circle cx="310.6" cy="148.5" r="3.8" fill="#08f21e"/>
<rect x="306.5" y="156.4" width="9.6" height="10" fill="#44ff44" fill-opacity="0.22" stroke="#2ee02e" stroke-width="1"/>
<circle cx="311.3" cy="161.7" r="3.8" fill="#08f21e"/>
<rect x="307.2" y="169.6" width="9.6" height="10" fill="#44ff44" fill-opacity="0.22" stroke="#2ee02e" stroke-width="1"/>
<circle cx="312.0" cy="174.9" r="3.8" fill="#08f21e"/>
<rect x="307.8" y="182.8" width="9.6" height="10" fill="#44ff44" fill-opacity="0.22" stroke="#2ee02e" stroke-width="1"/>
<circle cx="312.6" cy="188.1" r="3.8" fill="#08f21e"/>
<rect x="308.5" y="196.0" width="9.6" height="10" fill="#44ff44" fill-opacity="0.22" stroke="#2ee02e" stroke-width="1"/>
<circle cx="313.3" cy="201.3" r="3.8" fill="#08f21e"/>
<rect x="309.2" y="209.2" width="9.6" height="10" fill="#44ff44" fill-opacity="0.22" stroke="#2ee02e" stroke-width="1"/>
<circle cx="314.0" cy="214.5" r="3.8" fill="#08f21e"/>
<rect x="309.9" y="222.4" width="9.6" height="10" fill="#44ff44" fill-opacity="0.22" stroke="#2ee02e" stroke-width="1"/>
<circle cx="314.7" cy="227.7" r="3.8" fill="#08f21e"/>
<rect x="310.5" y="235.6" width="9.6" height="10" fill="#44ff44" fill-opacity="0.22" stroke="#2ee02e" stroke-width="1"/>
<circle cx="315.3" cy="240.9" r="3.8" fill="#08f21e"/>
<rect x="311.2" y="248.8" width="9.6" height="10" fill="#44ff44" fill-opacity="0.22" stroke="#2ee02e" stroke-width="1"/>
<circle cx="316.0" cy="254.1" r="3.8" fill="#08f21e"/>
<rect x="311.9" y="262.0" width="9.6" height="10" fill="#44ff44" fill-opacity="0.22" stroke="#2ee02e" stroke-width="1"/>
<circle cx="316.7" cy="267.3" r="3.8" fill="#08f21e"/>
<rect x="312.6" y="275.2" width="9.6" height="10" fill="#44ff44" fill-opacity="0.22" stroke="#2ee02e" stroke-width="1"/>
<circle cx="317.4" cy="280.5" r="3.8" fill="#08f21e"/>
<rect x="313.2" y="288.4" width="9.6" height="10" fill="#44ff44" fill-opacity="0.22" stroke="#2ee02e" stroke-width="1"/>
<circle cx="318.0" cy="293.7" r="3.8" fill="#08f21e"/>
<rect x="313.9" y="301.6" width="9.6" height="10" fill="#44ff44" fill-opacity="0.22" stroke="#2ee02e" stroke-width="1"/>
<circle cx="318.7" cy="306.9" r="3.8" fill="#08f21e"/>
<rect x="314.6" y="314.8" width="9.6" height="10" fill="#44ff44" fill-opacity="0.22" stroke="#2ee02e" stroke-width="1"/>
<circle cx="319.4" cy="320.1" r="3.8" fill="#08f21e"/>
<rect x="324.0" y="-9.0" width="9.6" height="10" fill="#44ff44" fill-opacity="0.22" stroke="#2ee02e" stroke-width="1"/>
<circle cx="328.8" cy="-3.7" r="3.8" fill="#08f21e"/>
<rect x="324.6" y="4.2" width="9.6" height="10" fill="#44ff44" fill-opacity="0.22" stroke="#2ee02e" stroke-width="1"/>
<circle cx="329.4" cy="9.5" r="3.8" fill="#08f21e"/>
<rect x="325.3" y="17.4" width="9.6" height="10" fill="#44ff44" fill-opacity="0.22" stroke="#2ee02e" stroke-width="1"/>
<circle cx="330.1" cy="22.7" r="3.8" fill="#08f21e"/>
<rect x="325.9" y="30.6" width="9.6" height="10" fill="#44ff44" fill-opacity="0.22" stroke="#2ee02e" stroke-width="1"/>
<circle cx="330.7" cy="35.9" r="3.8" fill="#08f21e"/>
<rect x="326.5" y="43.8" width="9.6" height="10" fill="#44ff44" fill-opacity="0.22" stroke="#2ee02e" stroke-width="1"/>
<circle cx="331.3" cy="49.1" r="3.8" fill="#08f21e"/>
<rect x="327.2" y="57.0" width="9.6" height="10" fill="#44ff44" fill-opacity="0.22" stroke="#2ee02e" stroke-width="1"/>
<circle cx="332.0" cy="62.3" r="3.8" fill="#08f21e"/>
<rect x="327.8" y="70.2" width="9.6" height="10" fill="#44ff44" fill-opacity="0.22" stroke="#2ee02e" stroke-width="1"/>
<circle cx="332.6" cy="75.5" r="3.8" fill="#08f21e"/>
<rect x="328.4" y="83.4" width="9.6" height="10" fill="#44ff44" fill-opacity="0.22" stroke="#2ee02e" stroke-width="1"/>
<circle cx="333.2" cy="88.7" r="3.8" fill="#08f21e"/>
<rect x="329.1" y="96.6" width="9.6" height="10" fill="#44ff44" fill-opacity="0.22" stroke="#2ee02e" stroke-width="1"/>
<circle cx="333.9" cy="101.9" r="3.8" fill="#08f21e"/>
<rect x="329.7" y="109.8" width="9.6" height="10" fill="#44ff44" fill-opacity="0.22" stroke="#2ee02e" stroke-width="1"/>
<circle cx="334.5" cy="115.1" r="3.8" fill="#08f21e"/>
<rect x="330.4" y="123.0" width="9.6" height="10" fill="#44ff44" fill-opacity="0.22" stroke="#2ee02e" stroke-width="1"/>
<circle cx="335.2" cy="128.3" r="3.8" fill="#08f21e"/>
<rect x="331.0" y="136.2" width="9.6" height="10" fill="#44ff44" fill-opacity="0.22" stroke="#2ee02e" stroke-width="1"/>
<circle cx="335.8" cy="141.5" r="3.8" fill="#08f21e"/>
<rect x="331.6" y="149.4" width="9.6" height="10" fill="#44ff44" fill-opacity="0.22" stroke="#2ee02e" stroke-width="1"/>
<circle cx="336.4" cy="154.7" r="3.8" fill="#08f21e"/>
<rect x="332.3" y="162.6" width="9.6" height="10" fill="#44ff44" fill-opacity="0.22" stroke="#2ee02e" stroke-width="1"/>
<circle cx="337.1" cy="167.9" r="3.8" fill="#08f21e"/>
<rect x="332.9" y="175.8" width="9.6" height="10" fill="#44ff44" fill-opacity="0.22" stroke="#2ee02e" stroke-width="1"/>
<circle cx="337.7" cy="181.1" r="3.8" fill="#08f21e"/>
<rect x="333.5" y="189.0" width="9.6" height="10" fill="#44ff44" fill-opacity="0.22" stroke="#2ee02e" stroke-width="1"/>
<circle cx="338.3" cy="194.3" r="3.8" fill="#08f21e"/>
<rect x="334.2" y="202.2" width="9.6" height="10" fill="#44ff44" fill-opacity="0.22" stroke="#2ee02e" stroke-width="1"/>
<circle cx="339.0" cy="207.5" r="3.8" fill="#08f21e"/>
<rect x="334.8" y="215.4" width="9.6" height="10" fill="#44ff44" fill-opacity="0.22" stroke="#2ee02e" stroke-width="1"/>
<circle cx="339.6" cy="220.7" r="3.8" fill="#08f21e"/>
<rect x="335.4" y="228.6" width="9.6" height="10" fill="#44ff44" fill-opacity="0.22" stroke="#2ee02e" stroke-width="1"/>
<circle cx="340.2" cy="233.9" r="3.8" fill="#08f21e"/>
<rect x="336.1" y="241.8" width="9.6" height="10" fill="#44ff44" fill-opacity="0.22" stroke="#2ee02e" stroke-width="1"/>
<circle cx="340.9" cy="247.1" r="3.8" fill="#08f21e"/>
<rect x="336.7" y="255.0" width="9.6" height="10" fill="#44ff44" fill-opacity="0.22" stroke="#2ee02e" stroke-width="1"/>
<circle cx="341.5" cy="260.3" r="3.8" fill="#08f21e"/>
<rect x="337.3" y="268.2" width="9.6" height="10" fill="#44ff44" fill-opacity="0.22" stroke="#2ee02e" stroke-width="1"/>
<circle cx="342.1" cy="273.5" r="3.8" fill="#08f21e"/>
<rect x="338.0" y="281.4" width="9.6" height="10" fill="#44ff44" fill-opacity="0.22" stroke="#2ee02e" stroke-width="1"/>
<circle cx="342.8" cy="286.7" r="3.8" fill="#08f21e"/>
<rect x="338.6" y="294.6" width="9.6" height="10" fill="#44ff44" fill-opacity="0.22" stroke="#2ee02e" stroke-width="1"/>
<circle cx="343.4" cy="299.9" r="3.8" fill="#08f21e"/>
<rect x="339.2" y="307.8" width="9.6" height="10" fill="#44ff44" fill-opacity="0.22" stroke="#2ee02e" stroke-width="1"/>
<circle cx="344.0" cy="313.1" r="3.8" fill="#08f21e"/>
<rect x="348.7" y="-4.0" width="9.6" height="10" fill="#44ff44" fill-opacity="0.22" stroke="#2ee02e" stroke-width="1"/>
<circle cx="353.5" cy="1.3" r="3.8" fill="#08f21e"/>
<rect x="349.4" y="9.2" width="9.6" height="10" fill="#44ff44" fill-opacity="0.22" stroke="#2ee02e" stroke-width="1"/>
<circle cx="354.2" cy="14.5" r="3.8" fill="#08f21e"/>
<rect x="350.0" y="22.4" width="9.6" height="10" fill="#44ff44" fill-opacity="0.22" stroke="#2ee02e" stroke-width="1"/>
<circle cx="354.8" cy="27.7" r="3.8" fill="#08f21e"/>
<rect x="350.6" y="35.6" width="9.6" height="10" fill="#44ff44" fill-opacity="0.22" stroke="#2ee02e" stroke-width="1"/>
<circle cx="355.4" cy="40.9" r="3.8" fill="#08f21e"/>
<rect x="351.2" y="48.8" width="9.6" height="10" fill="#44ff44" fill-opacity="0.22" stroke="#2ee02e" stroke-width="1"/>
<circle cx="356.0" cy="54.1" r="3.8" fill="#08f21e"/>
<rect x="351.8" y="62.0" width="9.6" height="10" fill="#44ff44" fill-opacity="0.22" stroke="#2ee02e" stroke-width="1"/>
<circle cx="356.6" cy="67.3" r="3.8" fill="#08f21e"/>
<rect x="352.4" y="75.2" width="9.6" height="10" fill="#44ff44" fill-opacity="0.22" stroke="#2ee02e" stroke-width="1"/>
<circle cx="357.2" cy="80.5" r="3.8" fill="#08f21e"/>
<rect x="353.0" y="88.4" width="9.6" height="10" fill="#44ff44" fill-opacity="0.22" stroke="#2ee02e" stroke-width="1"/>
<circle cx="357.8" cy="93.7" r="3.8" fill="#08f21e"/>
<rect x="353.7" y="101.6" width="9.6" height="10" fill="#44ff44" fill-opacity="0.22" stroke="#2ee02e" stroke-width="1"/>
<circle cx="358.5" cy="106.9" r="3.8" fill="#08f21e"/>
<rect x="354.3" y="114.8" width="9.6" height="10" fill="#44ff44" fill-opacity="0.22" stroke="#2ee02e" stroke-width="1"/>
<circle cx="359.1" cy="120.1" r="3.8" fill="#08f21e"/>
<rect x="354.9" y="128.0" width="9.6" height="10" fill="#44ff44" fill-opacity="0.22" stroke="#2ee02e" stroke-width="1"/>
<circle cx="359.7" cy="133.3" r="3.8" fill="#08f21e"/>
<rect x="355.5" y="141.2" width="9.6" height="10" fill="#44ff44" fill-opacity="0.22" stroke="#2ee02e" stroke-width="1"/>
<circle cx="360.3" cy="146.5" r="3.8" fill="#08f21e"/>
<rect x="356.1" y="154.4" width="9.6" height="10" fill="#44ff44" fill-opacity="0.22" stroke="#2ee02e" stroke-width="1"/>
<circle cx="360.9" cy="159.7" r="3.8" fill="#08f21e"/>
<rect x="356.7" y="167.6" width="9.6" height="10" fill="#44ff44" fill-opacity="0.22" stroke="#2ee02e" stroke-width="1"/>
<circle cx="361.5" cy="172.9" r="3.8" fill="#08f21e"/>
<rect x="357.3" y="180.8" width="9.6" height="10" fill="#44ff44" fill-opacity="0.22" stroke="#2ee02e" stroke-width="1"/>
<circle cx="362.1" cy="186.1" r="3.8" fill="#08f21e"/>
<rect x="357.9" y="194.0" width="9.6" height="10" fill="#44ff44" fill-opacity="0.22" stroke="#2ee02e" stroke-width="1"/>
<circle cx="362.7" cy="199.3" r="3.8" fill="#08f21e"/>
<rect x="358.6" y="207.2" width="9.6" height="10" fill="#44ff44" fill-opacity="0.22" stroke="#2ee02e" stroke-width="1"/>
<circle cx="363.4" cy="212.5" r="3.8" fill="#08f21e"/>
<rect x="359.2" y="220.4" width="9.6" height="10" fill="#44ff44" fill-opacity="0.22" stroke="#2ee02e" stroke-width="1"/>
<circle cx="364.0" cy="225.7" r="3.8" fill="#08f21e"/>
<rect x="359.8" y="233.6" width="9.6" height="10" fill="#44ff44" fill-opacity="0.22" stroke="#2ee02e" stroke-width="1"/>
<circle cx="364.6" cy="238.9" r="3.8" fill="#08f21e"/>
<rect x="360.4" y="246.8" width="9.6" height="10" fill="#44ff44" fill-opacity="0.22" stroke="#2ee02e" stroke-width="1"/>
<circle cx="365.2" cy="252.1" r="3.8" fill="#08f21e"/>
<rect x="361.0" y="260.0" width="9.6" height="10" fill="#44ff44" fill-opacity="0.22" stroke="#2ee02e" stroke-width="1"/>
<circle cx="365.8" cy="265.3" r="3.8" fill="#08f21e"/>
<rect x="361.6" y="273.2" width="9.6" height="10" fill="#44ff44" fill-opacity="0.22" stroke="#2ee02e" stroke-width="1"/>
<circle cx="366.4" cy="278.5" r="3.8" fill="#08f21e"/>
<rect x="362.2" y="286.4" width="9.6" height="10" fill="#44ff44" fill-opacity="0.22" stroke="#2ee02e" stroke-width="1"/>
<circle cx="367.0" cy="291.7" r="3.8" fill="#08f21e"/>
<rect x="362.9" y="299.6" width="9.6" height="10" fill="#44ff44" fill-opacity="0.22" stroke="#2ee02e" stroke-width="1"/>
<circle cx="367.7" cy="304.9" r="3.8" fill="#08f21e"/>
<rect x="363.5" y="312.8" width="9.6" height="10" fill="#44ff44" fill-opacity="0.22" stroke="#2ee02e" stroke-width="1"/>
<circle cx="368.3" cy="318.1" r="3.8" fill="#08f21e"/>
<text x="4" y="306.79999999999995" font-family="Liberation Sans" font-size="7.4" fill="#2c2c7c" textLength="153" lengthAdjust="spacingAndGlyphs">© OpenStreetMap - Map data ©2025 OpenStreetMap</text>
<line x1="295" y1="142" x2="295" y2="171" stroke="#6f6fd8" stroke-width="1"/>
<line x1="283" y1="155.5" x2="310" y2="155.5" stroke="#6f6fd8" stroke-width="1"/>
<rect x="293.5" y="154" width="3" height="3" fill="#e02020"/>
<rect x="312" y="161" width="153" height="64" fill="#0000f2"/>
<text x="315.5" y="173.5" font-family="Liberation Sans" font-size="8.3" fill="#fff">Label on GNSS track:</text>
<text x="315.5" y="184.8" font-family="Liberation Sans" font-size="8.3" fill="#fff">DateTime GPS: 3/29/2025 11:07:47 AM</text>
<text x="315.5" y="196.1" font-family="Liberation Sans" font-size="8.3" fill="#fff">Calculated coordinate:</text>
<text x="315.5" y="207.4" font-family="Liberation Sans" font-size="8.3" fill="#fff">Lat 46.3660390374 Lon 6.89674573</text>
</svg>
<!-- MAP END -->
<!-- status bar -->
<div class="a" style="left:2px;top:622px;width:1022px;height:20px;background:#1c2134"></div>
<div class="a" style="left:3px;top:622.5px;width:178px;height:15.5px;background:#141828"></div>
<div class="a" style="left:185px;top:622.5px;width:839px;height:15.5px;background:#141828"></div>
<div class="t" style="left:45px;top:627.5px;font-size:8.95px">WAITING FOR ACTION</div>

</div></body></html>
